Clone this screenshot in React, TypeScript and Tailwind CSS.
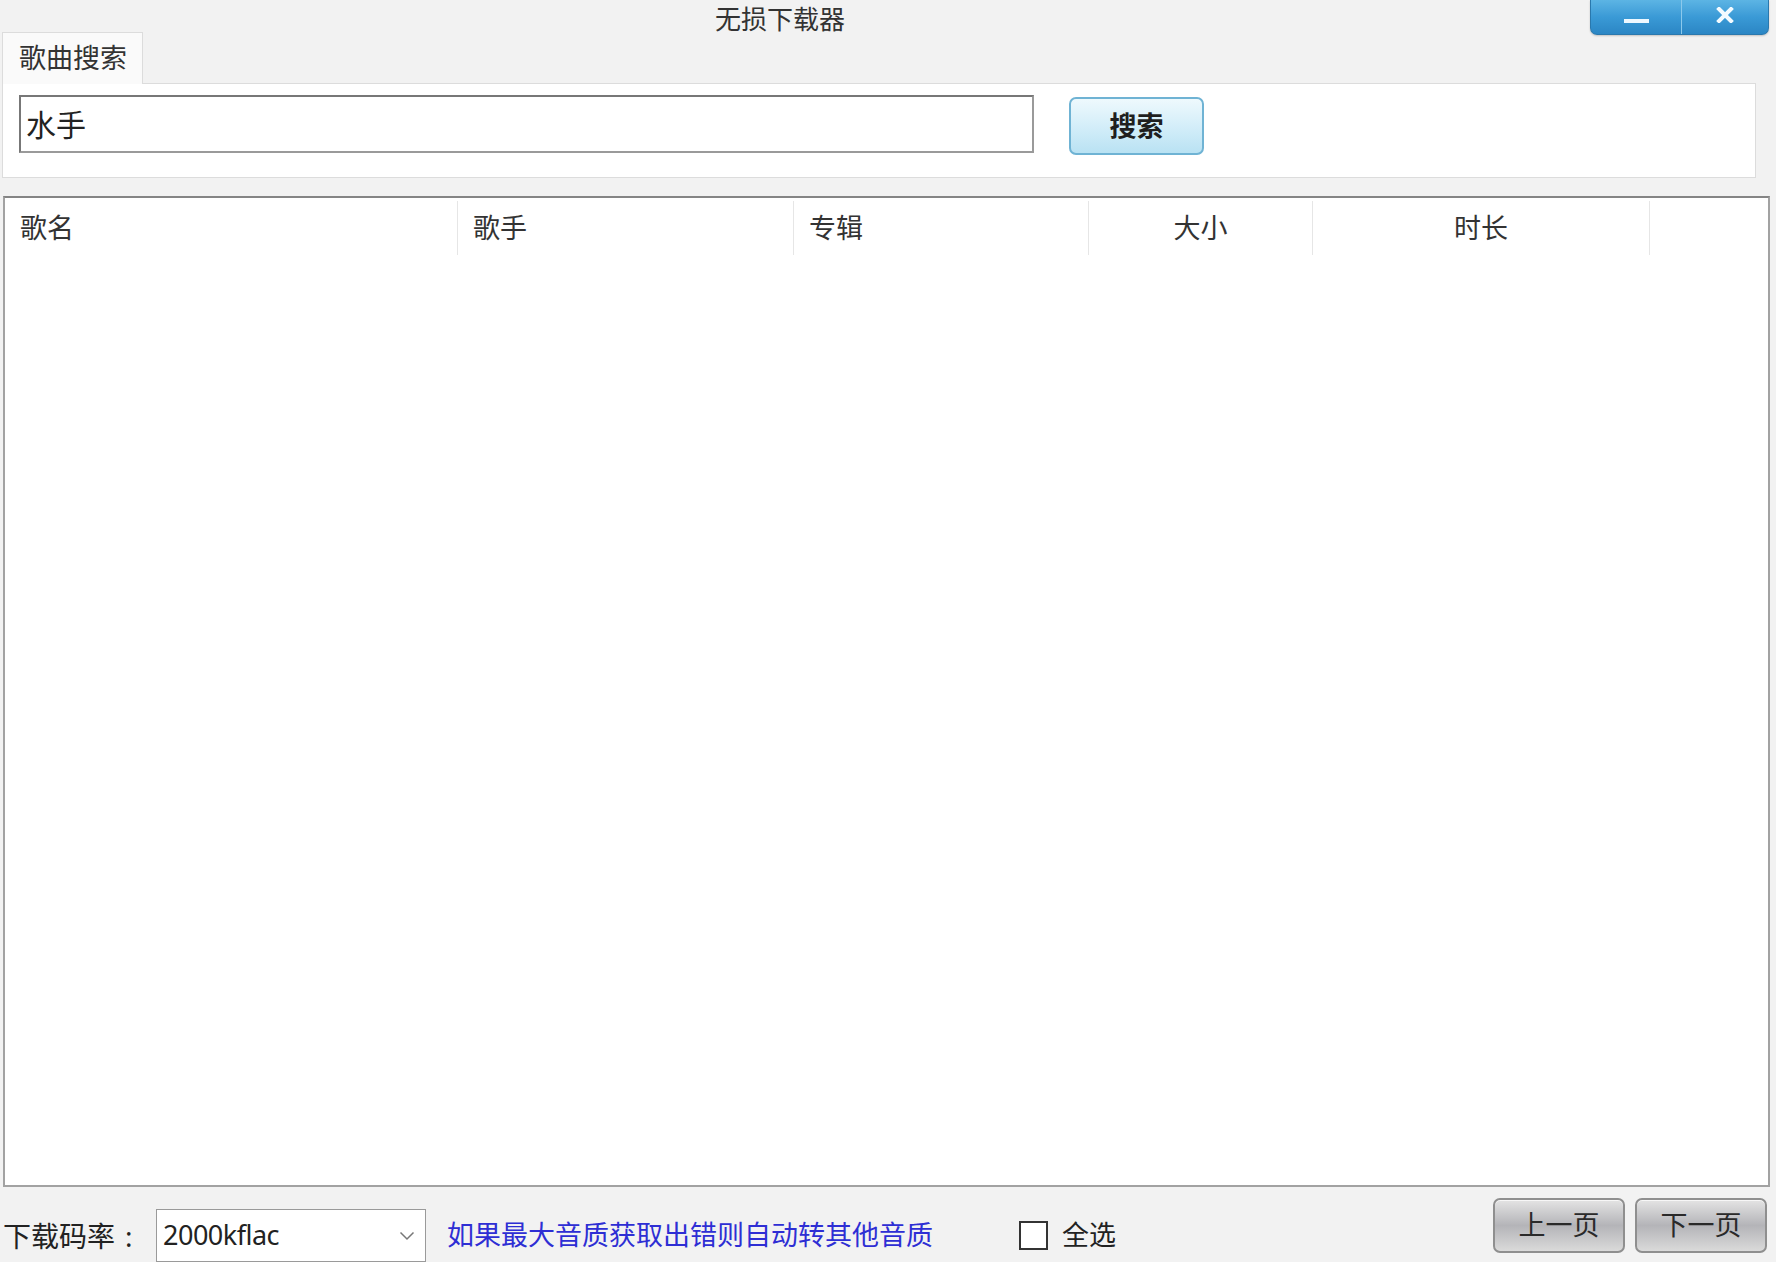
import { useState } from 'react';

type Column = {
  label: string;
  width: string;
  center?: boolean;
};

const COLUMNS: Column[] = [
  { label: '歌名', width: 'w-[453px]' },
  { label: '歌手', width: 'w-[336px]' },
  { label: '专辑', width: 'w-[295px]' },
  { label: '大小', width: 'w-[224px]', center: true },
  { label: '时长', width: 'w-[337px]', center: true },
];

const FONT = "font-['Noto_Sans','Noto_Sans_CJK_SC',sans-serif]";

function WindowButtons() {
  return (
    <div className="relative z-10 flex h-[35px] w-[179px] overflow-hidden rounded-b-[7px] border border-t-0 border-[#2a78ad] bg-gradient-to-b from-[#5cb4e4] via-[#3a9ad6] to-[#2b86c4] shadow-[0_1px_2px_rgba(0,0,0,0.2)]">
      <div className="flex w-[91px] items-end justify-center border-r border-[#8cc9ec] pb-[11px]">
        <div className="h-[4px] w-[25px] bg-[#eef8ff]" />
      </div>
      <div className="flex flex-1 items-center justify-center pb-[4px]">
        <svg width="18" height="16" viewBox="0 0 18 16">
          <path d="M3 2 L15 14 M15 2 L3 14" stroke="#f4fbff" strokeWidth="4" strokeLinecap="square" />
        </svg>
      </div>
    </div>
  );
}

export default function App() {
  const [keyword, setKeyword] = useState('水手');
  const [selectAll, setSelectAll] = useState(false);

  return (
    <div className={`${FONT} flex h-[1262px] w-[1776px] flex-col overflow-hidden bg-[#f2f2f2] text-[#222]`}>
      {/* title bar */}
      <div className="flex h-[32px] items-start">
        <div className="pl-[715px] text-[26px] leading-normal text-[#333]">无损下载器</div>
        <div className="ml-auto mr-[7px] h-[32px]">
          <WindowButtons />
        </div>
      </div>

      {/* tab */}
      <div className="flex h-[51px] items-end pl-[2px]">
        <div className="relative z-10 -mb-px flex h-[52px] w-[141px] items-center border border-b-0 border-[#dcdcdc] bg-[#fafafa] pl-[16px] text-[27px] text-[#333]">
          歌曲搜索
        </div>
      </div>

      {/* tab panel */}
      <div className="ml-[2px] flex h-[95px] w-[1754px] items-start border border-[#dcdcdc] bg-white pl-[16px] pt-[11px]">
        <div className="flex h-[58px] w-[1015px] items-center border-2 border-[#777] border-b-[#9a9a9a] border-r-[#9a9a9a] bg-white px-[5px]">
          <input
            value={keyword}
            onChange={(e) => setKeyword(e.target.value)}
            className="w-full bg-transparent text-[30px] text-[#222] outline-none"
          />
        </div>
        <button className="ml-[35px] mt-[2px] h-[58px] w-[135px] rounded-[7px] border-2 border-[#6fb3d4] bg-gradient-to-b from-[#eef9fd] via-[#d4eef9] to-[#b9e2f3] text-[27px] font-semibold text-[#1f1f1f]">
          搜索
        </button>
      </div>

      {/* list view */}
      <div className="ml-[3px] mt-[18px] flex h-[991px] w-[1767px] flex-col border-2 border-[#a2a2a2] border-t-[#858585] bg-white">
        <div className="flex h-[57px] items-stretch pt-[3px]">
          {COLUMNS.map((col) => (
            <div
              key={col.label}
              className={`${col.width} flex items-center border-r border-[#e6e6e6] text-[27px] text-[#333] ${
                col.center ? 'justify-center' : 'pl-[15px]'
              }`}
            >
              {col.label}
            </div>
          ))}
          <div className="flex-1" />
        </div>
        <div className="flex-1" />
      </div>

      {/* bottom bar */}
      <div className="flex h-[75px] items-start">
        <div className="mt-[22px] flex h-[53px] items-center">
          <div className="flex w-[156px] pl-[3px] text-[28px] text-[#222]">
            <span>下载码率</span>
            <span className="ml-[10px]">:</span>
          </div>
          <div className="flex h-[53px] w-[270px] items-center border border-[#9a9a9a] bg-white pl-[6px] pr-[10px]">
            <span className="flex-1 text-[27px] tracking-[-0.5px] text-[#222]">2000kflac</span>
            <svg width="16" height="10" viewBox="0 0 16 10">
              <path d="M1.5 1.5 L8 8 L14.5 1.5" fill="none" stroke="#777" strokeWidth="1.5" />
            </svg>
          </div>
          <div className="ml-[21px] w-[572px] text-[27px] text-[#2e2ed4]">如果最大音质获取出错则自动转其他音质</div>
          <button
            onClick={() => setSelectAll(!selectAll)}
            className="flex h-[29px] w-[29px] items-center justify-center border-2 border-[#333] bg-white"
          >
            {selectAll && (
              <svg width="18" height="14" viewBox="0 0 18 14">
                <path d="M2 7 L7 12 L16 2" fill="none" stroke="#222" strokeWidth="2.5" />
              </svg>
            )}
          </button>
          <div className="ml-[14px] text-[27px] text-[#222]">全选</div>
        </div>
        <div className="ml-auto mr-[9px] mt-[11px] flex gap-[10px]">
          {['上一页', '下一页'].map((label) => (
            <button
              key={label}
              className="h-[55px] w-[132px] rounded-[7px] border-2 border-[#8f8f8f] bg-gradient-to-b from-[#e4e4e4] via-[#b4b4b8] to-[#dadada] text-[27px] text-[#2a2a2a] shadow-[inset_0_1px_0_rgba(255,255,255,0.7)]"
            >
              {label}
            </button>
          ))}
        </div>
      </div>
    </div>
  );
}
